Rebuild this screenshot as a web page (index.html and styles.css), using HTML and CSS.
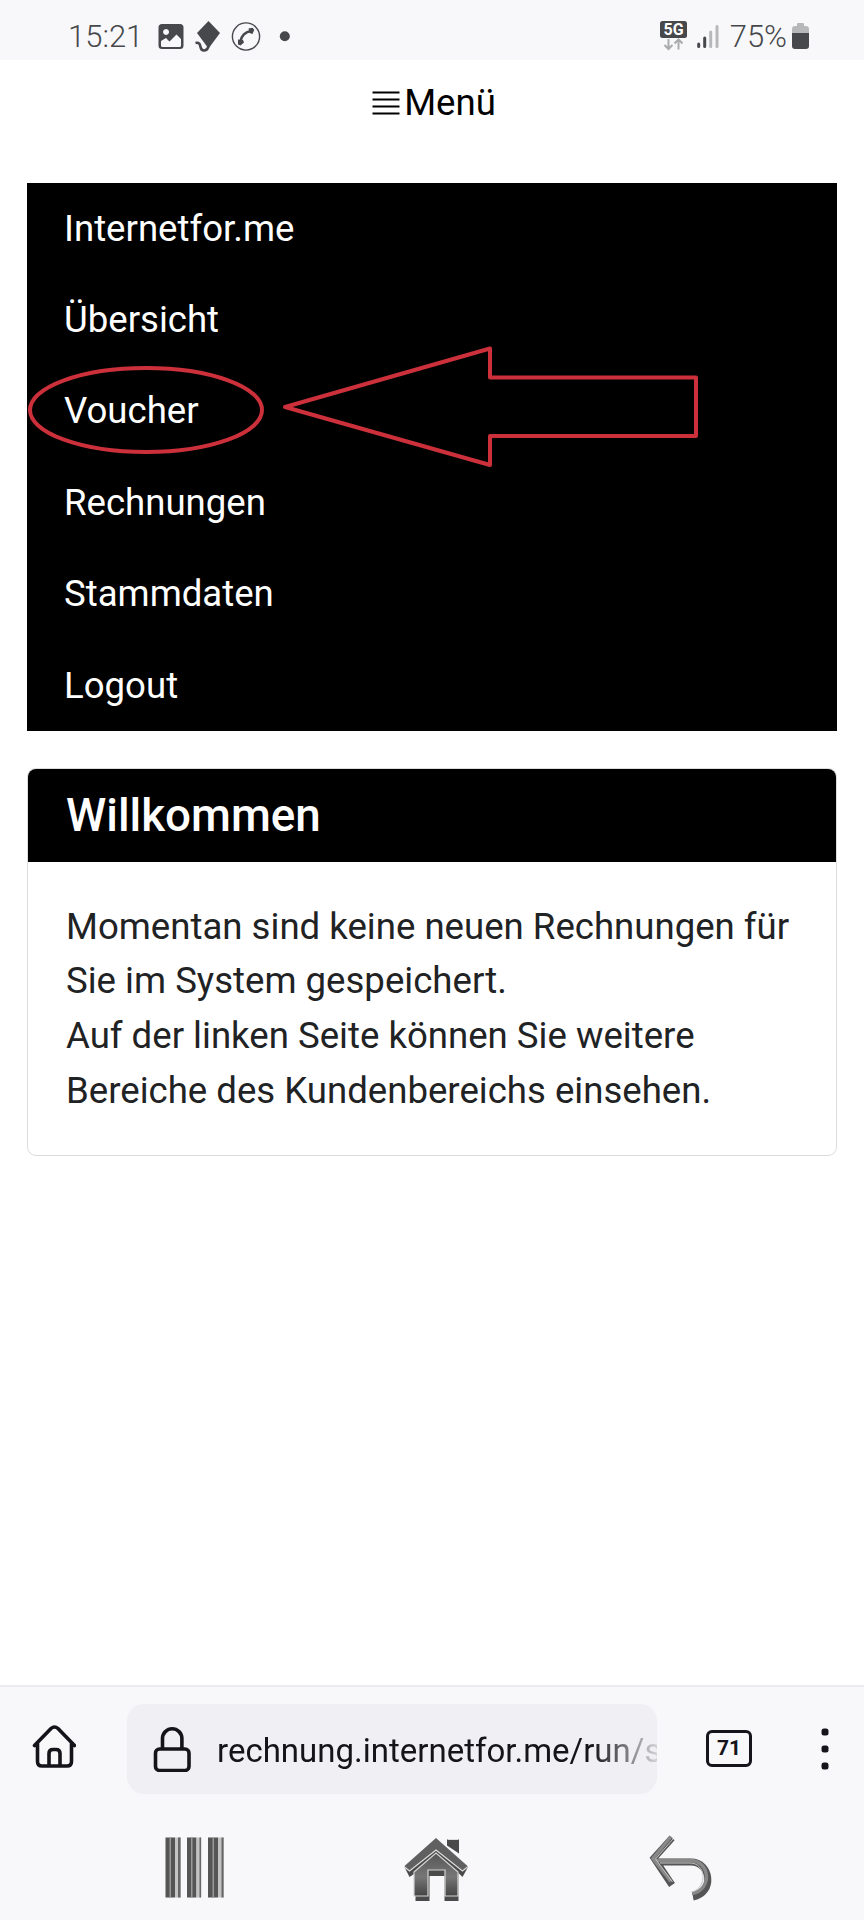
FILE: index.html
```html
<!DOCTYPE html>
<html lang="de">
<head>
    <meta charset="UTF-8">
    <meta name="viewport" content="width=device-width, initial-scale=1.0">
    <title>Kundenbereich - Internetfor.me</title>
    <link rel="stylesheet" href="styles.css">
</head>
<body>
    <div class="statusbar">
        <span class="clock">15:21</span>
        <svg class="status-icons" width="134" height="36" viewBox="156 18 134 36">
            <path fill="#47484b" fill-rule="evenodd" d="M162 24h18q3.500 0 3.500 3.500v18q0 3.500-3.500 3.500h-18q-3.500 0-3.500-3.500v-18q0-3.500 3.500-3.500zM161 41v4.500q0 1.500 1.500 1.500h17q1.500 0 1.500-1.500V39l-4.500-4.500-7 7-3.500-3.500zM166 29a3 3 0 1 0 .1 0z"/>
            <path fill="#47484b" d="M208.500 21L220 33 208.500 48.500 197 33z"/>
            <path class="kite-tail" d="M195.500 43c4.500-1 4.500 2 5 4 1 5 7 4.500 8-1"/>
            <circle cx="246" cy="36.500" r="13.600" fill="none" stroke="#47484b" stroke-width="1.400"/>
            <path class="handset" d="M240.500 41.500C241 36 245.500 31.500 251 31"/>
            <path fill="#47484b" d="M238 39.500l5 .5 1 2.500-3.500 3-2.500-1zM248.500 28.500l4-.7 1.800 2-1.800 4.200-3-1z"/>
            <circle cx="284.800" cy="36.200" r="5" fill="#47484b"/>
        </svg>
        <svg class="signal-icons" width="62" height="36" viewBox="658 18 62 36">
            <rect x="659" y="21" width="27" height="17" rx="2.500" fill="#47484b"/>
            <text class="net" x="672.500" y="35.300">5G</text>
            <path class="updown" d="M667.500 39v9.500M663.500 45l4 4 4-4M677.500 49.500V40M673.500 43.500l4-4 4 4"/>
            <path class="bar on" d="M697.700 44v2.500M703.700 38v8.500"/>
            <path class="bar" d="M709.700 32v14.500M716 26.500v20"/>
        </svg>
        <span class="percent">75%</span>
        <svg class="battery" width="17" height="26" viewBox="0 0 17 26">
            <path fill="#b7b8ba" d="M0 10V6q0-3 3-3h2V1q0-1 1-1h5q1 0 1 1v2h2q3 0 3 3v4z"/>
            <path fill="#47484b" d="M0 10h17v13q0 3-3 3H3q-3 0-3-3z"/>
        </svg>
    </div>

    <main class="page">
        <div class="menu-toggle">
            <svg width="28" height="25" viewBox="0 0 28 25"><path stroke="#000" stroke-width="2.200" d="M.5 1.500h27M.5 8.500h27M.5 15.500h27M.5 22.500h27"/></svg><span>Menü</span>
        </div>

        <nav class="menu">
            <a>Internetfor.me</a>
            <a>Übersicht</a>
            <a>Voucher</a>
            <a>Rechnungen</a>
            <a>Stammdaten</a>
            <a>Logout</a>
            <!-- marker around the voucher entry -->
            <svg class="marker" width="810" height="548" viewBox="27 183 810 548">
                <ellipse cx="146" cy="410" rx="116" ry="42"/>
                <path d="M285 407L490 348.500V377.500h206V436H490v29z"/>
            </svg>
        </nav>

        <section class="card">
            <h5 class="card-header">Willkommen</h5>
            <div class="card-body">Momentan sind keine neuen Rechnungen für Sie im System gespeichert.<br>Auf der linken Seite können Sie weitere Bereiche des Kundenbereichs einsehen.</div>
        </section>
    </main>

    <footer class="browser">
        <div class="toolbar">
            <svg class="home" width="44" height="44" viewBox="32 1726.500 44 44"><path d="M34.500 1747L51 1730q3.500-3 7 0l16.500 17M37.500 1745v18q0 4.500 4.500 4.500h25q4.500 0 4.500-4.500v-18M49 1767v-12q0-4 4-4h3q4 0 4 4v12"/></svg>
            <div class="address">
                <svg class="lock" width="38" height="46" viewBox="153 1726 38 46"><rect x="155.500" y="1749" width="33.500" height="21.500" rx="4"/><path d="M162.500 1748v-9.500a9.700 9.700 0 0 1 19.400 0v9.500"/></svg>
                <span class="url">rechnung.internetfor.me/run/s</span>
            </div>
            <div class="tabs">71</div>
            <svg class="more" width="8" height="42" viewBox="0 0 8 42"><rect x=".5" y=".5" width="7" height="7" rx="2.500"/><rect x=".5" y="17.500" width="7" height="7" rx="2.500"/><rect x=".5" y="34.500" width="7" height="7" rx="2.500"/></svg>
        </div>
        <svg class="softkeys" width="864" height="85" viewBox="0 1825 864 85">
            <defs>
                <linearGradient id="metal" x1="0" y1="0" x2="0" y2="1">
                    <stop offset="0" stop-color="#555"/>
                    <stop offset=".55" stop-color="#777"/>
                    <stop offset="1" stop-color="#444"/>
                </linearGradient>
            </defs>
            <g class="recent">
                <path fill="#555" d="M165.500 1837.500h9.500v60h-9.500zM187 1837.500h9.500v60H187zM208 1837.500h10v60h-10z"/>
                <path fill="#999" d="M169.500 1837.500h1.500v60h-1.500zM191 1837.500h1.500v60H191zM212.500 1837.500h1.500v60h-1.500z"/>
                <path fill="#c4c4c4" d="M175 1837.500h6v60h-6zM196.500 1837.500h5v60h-5zM218 1837.500h6v60h-6z"/>
                <path fill="#666" d="M178 1837.500h2.500v60H178zM199.500 1837.500h1.500v60h-1.500zM221.500 1837.500h2v60h-2z"/>
            </g>
            <g class="start">
                <path fill="#4a4a4a" d="M404.500 1867l5 10 6-4v28h14v-25h15v25h14v-28l4 4 5.500-10-32-22zM447 1839.500h12v14l-12-8z"/>
                <path fill="url(#metal)" stroke="#d4d4d4" stroke-width="1.200" d="M414 1872l22-19 22 19v24h-13v-26h-17v26h-14z"/>
                <path fill="#606060" d="M404.500 1866l31.500-28 31.500 28-4.500 5-27-20-27 20z"/>
                <path class="shine" d="M404.500 1867l5 4 26.500-21 26.500 21 5-4M448 1839.500h10"/>
            </g>
            <g class="back">
                <path stroke="#555" stroke-width="7" d="M672 1838l-18 20 18 27M655 1862h36c20 0 24 31 2 35"/>
                <path stroke="#888" stroke-width="3.500" d="M671 1836.500l-18 22 18 23M655 1860.500h35c20 0 23 29 2 33"/>
                <path stroke="#c4c4c4" stroke-width="1" d="M673 1839l-17.500 20 17 23M660 1863h30c16 0 18 24 2 29"/>
            </g>
        </svg>
    </footer>
</body>
</html>
```

FILE: styles.css
```css
* {
    box-sizing: border-box;
}
body {
    margin: 0;
    height: 1920px;
    display: flex;
    flex-direction: column;
    background: #fff;
    color: #212224;
    font-family: Roboto, "Liberation Sans", sans-serif;
    font-size: 36.6px;
    line-height: 1.5;
}
svg {
    display: block;
    flex: none;
}
.statusbar {
    height: 60px;
    flex: none;
    display: flex;
    align-items: center;
    padding: 12px 55px 0 68px;
    background: #f8f8fb;
    color: #47484b;
    font-size: 31px;
    font-weight: 300;
    line-height: 46px;
}
.clock, .percent {
    padding-top: 2px;
}
.clock {
    width: 88px;
}
.signal-icons {
    margin-left: auto;
}
.percent {
    margin: 0 5px 0 9px;
}
.net {
    fill: #fff;
    font-size: 16px;
    font-weight: 700;
    text-anchor: middle;
}
.kite-tail, .handset {
    fill: none;
    stroke: #47484b;
    stroke-width: 2.6;
}
.updown {
    fill: none;
    stroke: #aaabad;
    stroke-width: 2;
}
.bar {
    stroke: #b7b8ba;
    stroke-width: 3;
    stroke-linecap: round;
}
.bar.on {
    stroke: #47484b;
}
.page {
    flex: 1;
    padding: 15px 27px 0;
}
.menu-toggle {
    display: flex;
    justify-content: center;
    align-items: center;
    gap: 4px;
    height: 55px;
    margin-bottom: 52.5px;
    padding: 1px 0 0 4px;
    color: #000;
}
.menu {
    position: relative;
    background: #000;
    height: 548px;
    width: 810px;
    padding-top: 1px;
}
.menu a {
    display: block;
    height: 91.4px;
    padding: 18.2px 37px;
    color: #fff;
}
.marker {
    position: absolute;
    left: 0;
    top: 0;
    fill: none;
    stroke: #cc303a;
    stroke-width: 4;
    stroke-linejoin: round;
}
.card {
    width: 810px;
    margin-top: 37.5px;
    border: 1px solid #dcdcdc;
    border-radius: 9px;
    overflow: hidden;
}
.card-header {
    margin: 0;
    padding: 19.5px 38px 0;
    height: 93px;
    background: #000;
    color: #fff;
    font-size: 45.75px;
    font-weight: 500;
    line-height: 1.2;
}
.card-body {
    padding: 37.6px 36px 35.6px 38px;
}
.browser {
    flex: none;
    height: 235px;
    border-top: 2px solid #ececee;
    background: #f8f8fb;
}
.toolbar {
    display: flex;
    align-items: center;
    height: 124px;
    margin-bottom: 14px;
    padding: 0 35px 0 32px;
}
.home, .lock {
    fill: none;
    stroke: #15141a;
    stroke-width: 3.6;
    stroke-linecap: round;
    stroke-linejoin: round;
}
.address {
    display: flex;
    align-items: center;
    width: 530px;
    height: 90px;
    margin-left: 51px;
    padding-left: 26px;
    border-radius: 17px;
    background: #f0f0f4;
    overflow: hidden;
}
.url {
    margin-left: 26px;
    padding-top: 4px;
    width: 440px;
    overflow: hidden;
    white-space: nowrap;
    color: #15141a;
    font-size: 33px;
    -webkit-mask-image: linear-gradient(to right, #000 375px, transparent 450px);
    mask-image: linear-gradient(to right, #000 375px, transparent 450px);
}
.home {
    margin-top: -4px;
}
.tabs {
    width: 46px;
    height: 37px;
    margin: -2px 0 0 49px;
    border: 3.5px solid #15141a;
    border-radius: 6px;
    color: #15141a;
    font-size: 21px;
    font-weight: 700;
    line-height: 30px;
    text-align: center;
}
.more {
    margin-left: auto;
    fill: #15141a;
}
.shine {
    fill: none;
    stroke: #ddd;
    stroke-width: 1.2;
}
.back {
    fill: none;
}
```
